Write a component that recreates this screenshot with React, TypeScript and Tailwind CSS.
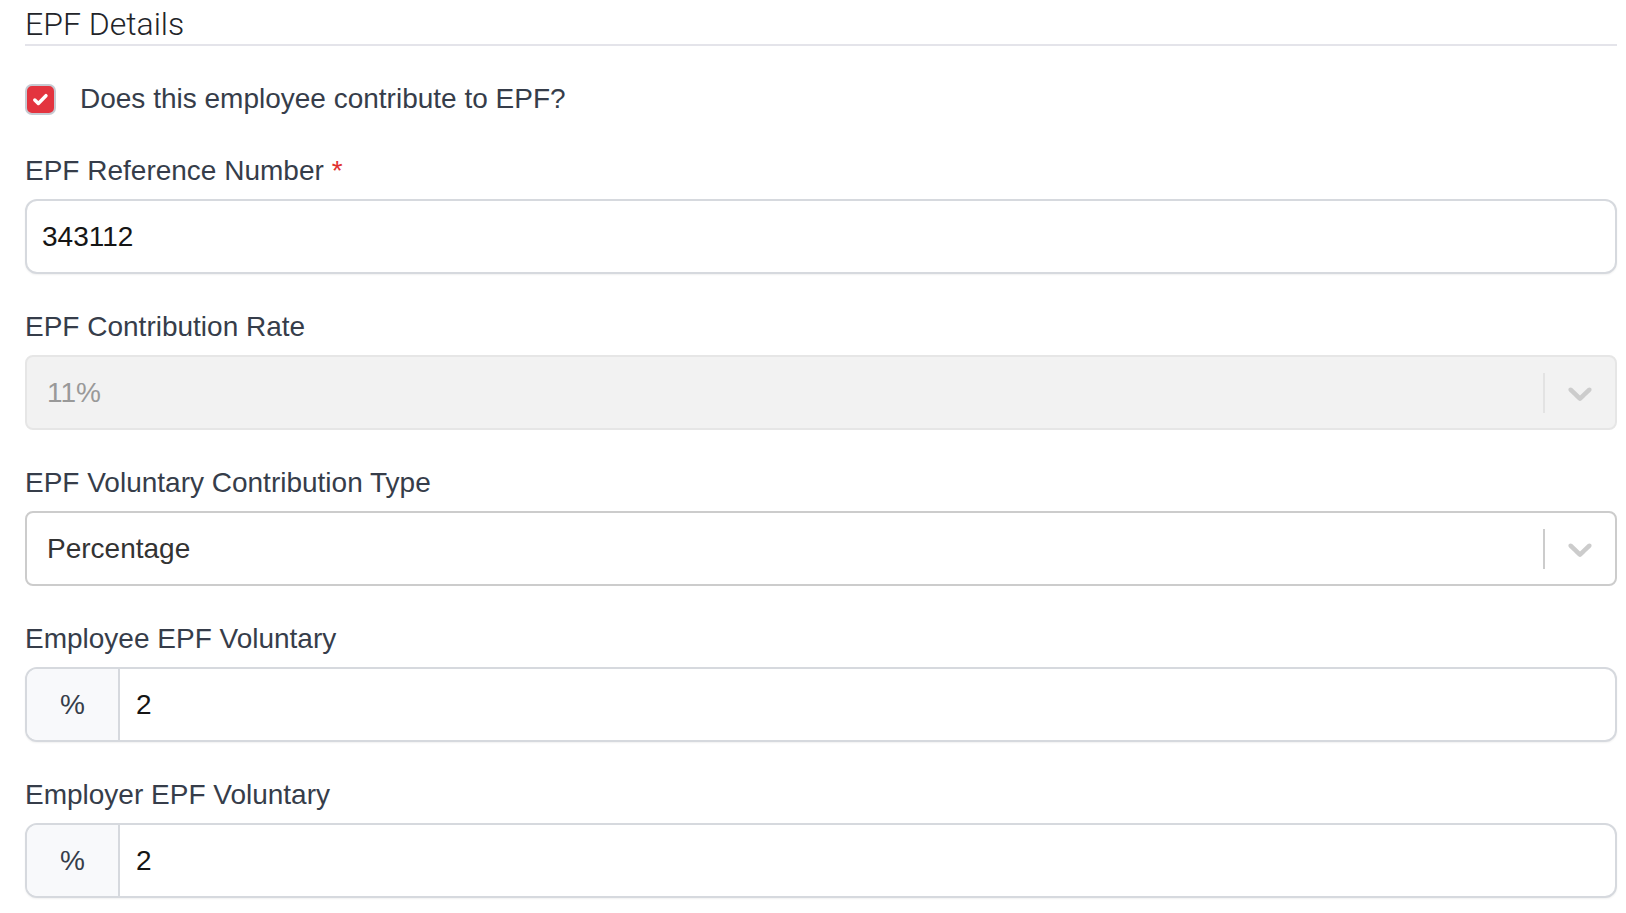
import React from "react";

const Chevron = ({ color }: { color: string }) => (
  <svg width="40" height="40" viewBox="0 0 20 20" fill={color} aria-hidden="true">
    <path d="M4.516 7.548c0.436-0.446 1.043-0.481 1.576 0l3.908 3.747 3.908-3.747c0.533-0.481 1.141-0.446 1.574 0 0.436 0.445 0.408 1.197 0 1.615-0.406 0.418-4.695 4.502-4.695 4.502-0.217 0.223-0.502 0.335-0.787 0.335s-0.57-0.112-0.789-0.335c0 0-4.287-4.084-4.695-4.502s-0.436-1.17 0-1.615z" />
  </svg>
);

const Label = ({ children, required }: { children: React.ReactNode; required?: boolean }) => (
  <div className="h-[40px] leading-[40px] text-[28px] text-[#363d4a] mb-[8px]">
    {children}
    {required && <span className="text-[#e0312f] ml-[8px]">*</span>}
  </div>
);

const PercentInput = ({ value }: { value: string }) => (
  <div className="flex h-[75px] rounded-[12px] border-2 border-[#d6d9de] shadow-[0_1px_2px_rgba(0,0,0,0.06)] overflow-hidden bg-white">
    <div className="w-[93px] flex items-center justify-center bg-[#f8f9fb] border-r-2 border-[#d6d9de] text-[28px] text-[#363d4a]">
      %
    </div>
    <div className="flex-1 flex items-center pl-[16px] text-[28px] text-[#151515]">{value}</div>
  </div>
);

export default function App() {
  return (
    <div
      className="w-[1626px] h-[913px] bg-white pl-[25px] pr-[9px] overflow-hidden"
      style={{ fontFamily: '"Liberation Sans", Arial, sans-serif' }}
    >
      <div
        className="h-[46px] pt-[4px] border-b-2 border-[#e4e4ea] text-[32px] leading-[40px] text-[#222429] font-light"
        style={{ fontFamily: 'Roboto, "Liberation Sans", sans-serif' }}
      >
        EPF Details
      </div>

      <div className="mt-[33px] h-[40px] flex items-center">
        <div className="w-[31px] h-[31px] rounded-[7px] border-2 border-[#c6cad2] bg-[#e3343f] flex items-center justify-center">
          <svg width="19" height="19" viewBox="0 0 16 16" fill="none" aria-hidden="true">
            <path d="M3.2 8.4l3 3 6.4-6.6" stroke="white" strokeWidth="2.9" strokeLinecap="round" strokeLinejoin="round" />
          </svg>
        </div>
        <span className="ml-[24px] text-[28px] text-[#363d4a]">Does this employee contribute to EPF?</span>
      </div>

      <div className="mt-[32px]">
        <Label required>EPF Reference Number</Label>
        <div className="h-[75px] rounded-[12px] border-2 border-[#d6d9de] shadow-[0_1px_2px_rgba(0,0,0,0.06)] flex items-center pl-[15px] text-[28px] text-[#151515] bg-white">
          343112
        </div>
      </div>

      <div className="mt-[33px]">
        <Label>EPF Contribution Rate</Label>
        <div className="h-[75px] rounded-[8px] border-2 border-[#e6e6e6] bg-[#f2f2f2] flex items-center">
          <div className="flex-1 pl-[20px] text-[28px] text-[#999999]">11%</div>
          <div className="w-[2px] h-[40px] bg-[#e3e3e3]" />
          <div className="w-[70px] flex items-center justify-center">
            <Chevron color="#cccccc" />
          </div>
        </div>
      </div>

      <div className="mt-[33px]">
        <Label>EPF Voluntary Contribution Type</Label>
        <div className="h-[75px] rounded-[8px] border-2 border-[#cccccc] bg-white flex items-center">
          <div className="flex-1 pl-[20px] text-[28px] text-[#333333]">Percentage</div>
          <div className="w-[2px] h-[40px] bg-[#cccccc]" />
          <div className="w-[70px] flex items-center justify-center">
            <Chevron color="#cccccc" />
          </div>
        </div>
      </div>

      <div className="mt-[33px]">
        <Label>Employee EPF Voluntary</Label>
        <PercentInput value="2" />
      </div>

      <div className="mt-[33px]">
        <Label>Employer EPF Voluntary</Label>
        <PercentInput value="2" />
      </div>
    </div>
  );
}
